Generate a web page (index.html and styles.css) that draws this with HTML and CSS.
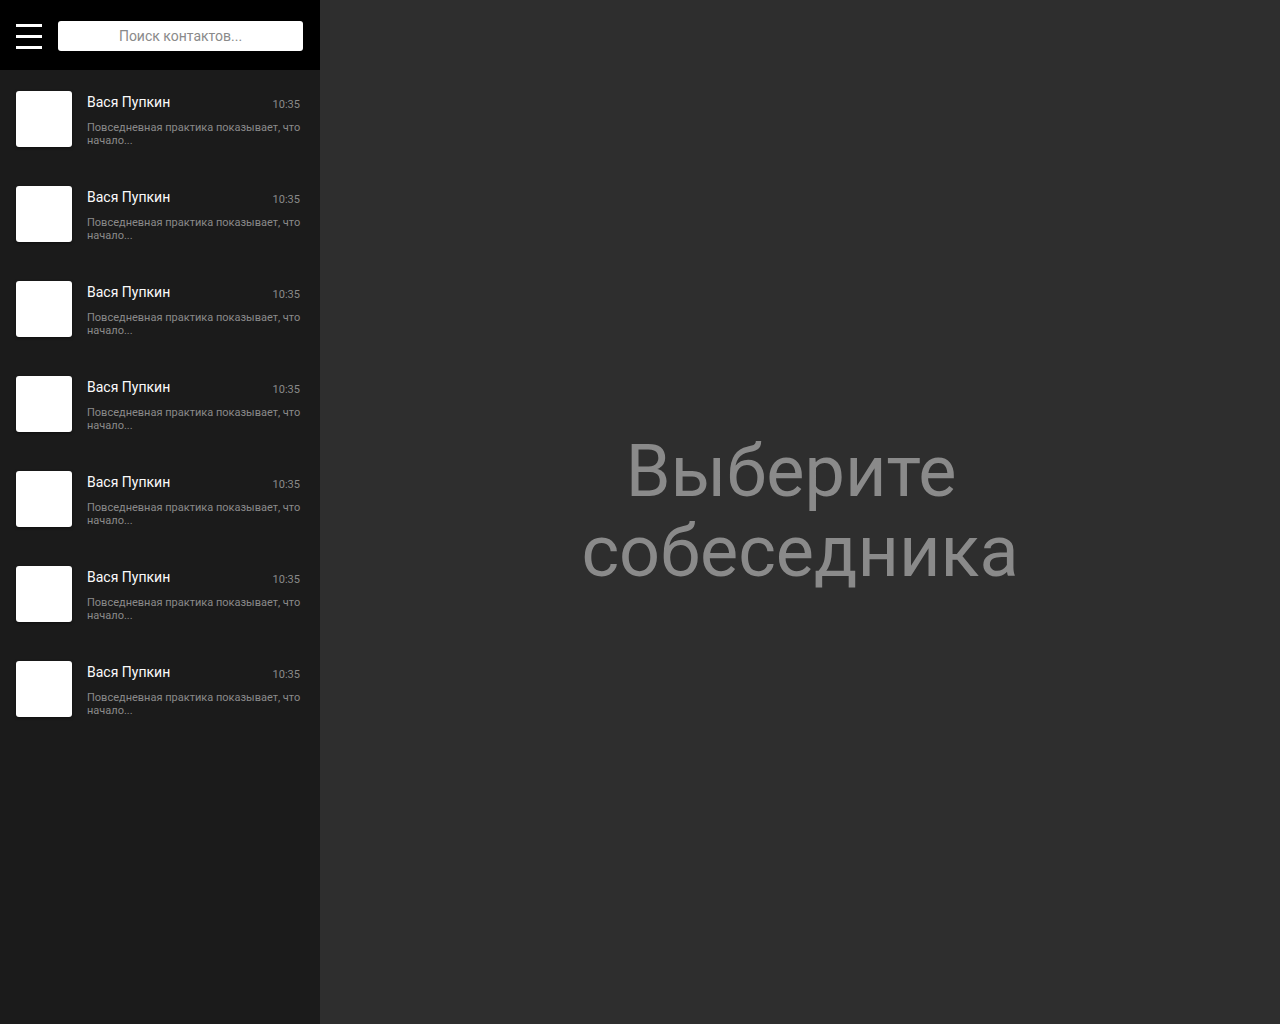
FILE: index.html
```html
<!DOCTYPE html>
<html lang="ru">
<head>
<meta charset="utf-8">
<title>Чат</title>
<link rel="stylesheet" href="styles.css">
</head>
<body>
<div class="app">
  <aside class="sidebar">
    <header class="top">
      <button class="burger" aria-label="Меню"><span></span><span></span><span></span></button>
      <input class="search" type="text" placeholder="Поиск контактов...">
    </header>
    <ul class="list">
      <li class="item"><div class="avatar"></div><div class="info"><div class="row"><span class="name">Вася Пупкин</span><span class="time">10:35</span></div><p class="preview">Повседневная практика показывает, что начало...</p></div></li>
      <li class="item"><div class="avatar"></div><div class="info"><div class="row"><span class="name">Вася Пупкин</span><span class="time">10:35</span></div><p class="preview">Повседневная практика показывает, что начало...</p></div></li>
      <li class="item"><div class="avatar"></div><div class="info"><div class="row"><span class="name">Вася Пупкин</span><span class="time">10:35</span></div><p class="preview">Повседневная практика показывает, что начало...</p></div></li>
      <li class="item"><div class="avatar"></div><div class="info"><div class="row"><span class="name">Вася Пупкин</span><span class="time">10:35</span></div><p class="preview">Повседневная практика показывает, что начало...</p></div></li>
      <li class="item"><div class="avatar"></div><div class="info"><div class="row"><span class="name">Вася Пупкин</span><span class="time">10:35</span></div><p class="preview">Повседневная практика показывает, что начало...</p></div></li>
      <li class="item"><div class="avatar"></div><div class="info"><div class="row"><span class="name">Вася Пупкин</span><span class="time">10:35</span></div><p class="preview">Повседневная практика показывает, что начало...</p></div></li>
      <li class="item"><div class="avatar"></div><div class="info"><div class="row"><span class="name">Вася Пупкин</span><span class="time">10:35</span></div><p class="preview">Повседневная практика показывает, что начало...</p></div></li>
    </ul>
  </aside>
  <main class="main">
    <h1 class="empty">Выберите собеседника</h1>
  </main>
</div>
</body>
</html>
```
FILE: styles.css
```css
* { box-sizing: border-box; }
html, body { margin: 0; padding: 0; height: 100%; }
body {
  font-family: Roboto, "Noto Sans", "Liberation Sans", sans-serif;
  background: #2e2e2e;
}
.app {
  display: flex;
  height: 1024px;
}
.sidebar {
  width: 320px;
  flex: none;
  background: #1b1b1b;
  display: flex;
  flex-direction: column;
}
.top {
  height: 70px;
  background: #000;
  display: flex;
  align-items: flex-start;
  padding: 21px 17px 0 16px;
  gap: 16px;
}
.burger {
  width: 26px;
  height: 25px;
  padding: 0;
  margin: 3px 0 0 0;
  border: 0;
  background: transparent;
  display: flex;
  flex-direction: column;
  justify-content: space-between;
}
.burger span {
  display: block;
  height: 3px;
  width: 26px;
  background: #fff;
}
.search {
  flex: 1;
  height: 30px;
  border: 0;
  border-radius: 3px;
  background: #fff;
  text-align: center;
  font-family: Roboto, sans-serif;
  font-size: 14px;
  color: #333;
  outline: none;
  padding: 0 8px;
}
.search::placeholder { color: #8a8a8a; }
.list {
  list-style: none;
  margin: 0;
  padding: 1px 0 0 0;
}
.item {
  height: 95px;
  display: flex;
  align-items: flex-start;
  padding: 20px 20px 0 16px;
  gap: 15px;
}
.avatar {
  width: 56px;
  height: 56px;
  flex: none;
  background: #fff;
  border-radius: 3px;
  box-shadow: 0 1px 3px rgba(0,0,0,0.5);
}
.info {
  flex: 1;
  min-width: 0;
  padding-top: 3px;
}
.row {
  display: flex;
  justify-content: space-between;
  align-items: flex-start;
}
.name {
  color: #fafafa;
  font-size: 14px;
}
.time {
  color: #8a8a8a;
  font-size: 11px;
  margin-top: 4px;
}
.preview {
  margin: 10px -6px 0 0;
  color: #8a8a8a;
  font-size: 11px;
  line-height: 13px;
}
.main {
  flex: 1;
  display: flex;
  align-items: center;
  justify-content: center;
}
.empty {
  margin: 0;
  width: 460px;
  text-align: center;
  font-size: 72px;
  font-weight: 400;
  line-height: 80px;
  color: #8a8a8a;
  white-space: break-spaces;
}
```
